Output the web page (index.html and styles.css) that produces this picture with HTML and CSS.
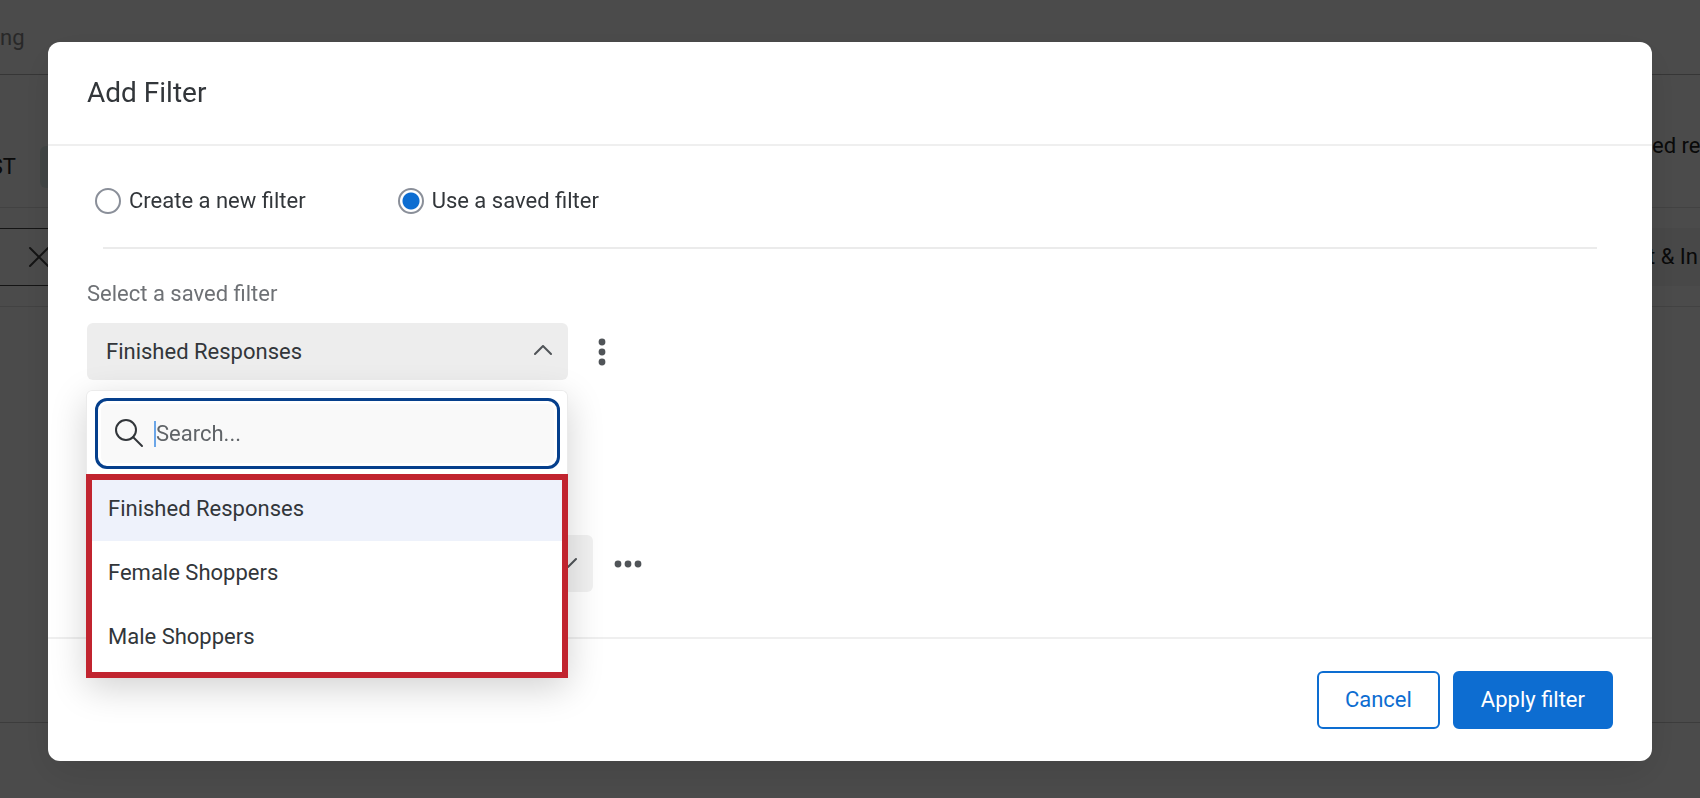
FILE: index.html
```html
<!DOCTYPE html>
<html lang="en">
  <head>
    <meta charset="UTF-8" />
    <meta name="viewport" content="width=device-width, initial-scale=1.0" />
    <title>Add Filter</title>
    <link rel="stylesheet" href="styles.css">
  </head>
  <body>
    <!-- page behind the dialog -->
    <div class="page">
      <div class="page-top"><span>ng</span></div>
      <div class="page-info">
        <span class="timezone">ST</span>
        <span class="tag"></span>
        <span class="summary">ed re</span>
      </div>
      <div class="page-filters">
        <div class="filter-field">
          <svg width="22" height="22" viewBox="0 0 22 22"><path d="M2 2l18 18M20 2L2 20" /></svg>
        </div>
        <div class="filter-chip">t &amp; In</div>
      </div>
      <div class="page-content"></div>
    </div>

    <div class="overlay">
      <div class="modal" role="dialog" aria-labelledby="modalTitle">
        <div class="modal-header">
          <h1 id="modalTitle">Add Filter</h1>
        </div>

        <div class="modal-body">
          <div class="choices">
            <label class="choice"><input type="radio" name="mode" /> Create a new filter</label>
            <label class="choice"><input type="radio" name="mode" checked /> Use a saved filter</label>
          </div>

          <label class="field-label" for="savedFilter">Select a saved filter</label>
          <div class="row">
            <div class="dropdown">
              <button id="savedFilter" class="select" type="button" aria-expanded="true">
                <span>Finished Responses</span>
                <svg width="18" height="14" viewBox="0 0 18 14"><path d="M1 9l8-8 8 8" /></svg>
              </button>
              <div class="menu">
                <div class="menu-search">
                  <label class="search">
                    <svg width="30" height="30" viewBox="0 0 30 30"><circle cx="12" cy="11" r="10" /><path d="M19 18l9 9" /></svg>
                    <span class="caret"></span>
                    <input type="text" placeholder="Search..." aria-label="Search" />
                  </label>
                </div>
                <ul class="options">
                  <li><button class="option selected" type="button">Finished Responses</button></li>
                  <li><button class="option" type="button">Female Shoppers</button></li>
                  <li><button class="option" type="button">Male Shoppers</button></li>
                </ul>
              </div>
            </div>
            <button class="more" type="button" aria-label="Filter options">
              <svg width="8" height="28" viewBox="0 0 8 28"><circle cx="4" cy="4" r="3.4" /><circle cx="4" cy="14" r="3.4" /><circle cx="4" cy="24" r="3.4" /></svg>
            </button>
          </div>

          <div class="row condition">
            <button class="select wide" type="button" aria-label="Condition">
              <svg width="18" height="14" viewBox="0 0 18 14"><path d="M1 2l8 8 8-8" /></svg>
            </button>
            <button class="more" type="button" aria-label="Condition options">
              <svg width="28" height="8" viewBox="0 0 28 8"><circle cx="4" cy="4" r="3.4" /><circle cx="14" cy="4" r="3.4" /><circle cx="24" cy="4" r="3.4" /></svg>
            </button>
          </div>
        </div>

        <div class="modal-footer">
          <button class="button cancel" type="button">Cancel</button>
          <button class="button apply" type="button">Apply filter</button>
        </div>
      </div>
    </div>
  </body>
</html>
```
FILE: styles.css
```css
* {
  box-sizing: border-box;
}
body {
  font-family: Roboto, "Liberation Sans", sans-serif;
  font-size: 22px;
  line-height: 28px;
  color: #32363a;
  margin: 0;
  background-color: #fafafa;
}
button,
input {
  font: inherit;
  color: inherit;
}
button {
  cursor: pointer;
}
svg {
  display: block;
  flex: none;
  fill: none;
  stroke: #505458;
  stroke-width: 2;
  stroke-linecap: round;
  stroke-linejoin: round;
}

/* page behind the dialog */
.page {
  display: flex;
  flex-direction: column;
  height: 100vh;
  overflow: hidden;
  color: #222;
}
.page-top {
  height: 75px;
  padding-top: 24px;
  border-bottom: 1px solid #b4b4b4;
  color: #888;
}
.page-info {
  display: flex;
  align-items: flex-start;
  gap: 24px;
  height: 133px;
  padding-top: 57px;
  border-bottom: 1px solid #dcdcdc;
  white-space: nowrap;
}
.timezone {
  display: flex;
  justify-content: flex-end;
  width: 16px;
  padding-top: 21px;
}
.tag {
  width: 160px;
  height: 42px;
  margin-top: 14px;
  border-radius: 6px;
  background-color: #dcebe8;
}
.summary {
  width: 48px;
  margin-left: auto;
}
.page-filters {
  display: flex;
  justify-content: space-between;
  padding: 20px 0;
  border-bottom: 1px solid #dcdcdc;
}
.filter-field {
  display: flex;
  align-items: center;
  width: 200px;
  height: 58px;
  padding-left: 28px;
  border: solid #444;
  border-width: 1px 0;
}
.filter-field svg {
  stroke: #444;
}
.filter-chip {
  width: 240px;
  padding: 15px 0 15px 188px;
  background-color: #f0f0f0;
  white-space: nowrap;
}
.page-content {
  flex: 1;
  margin-bottom: 75px;
  border-bottom: 1px solid #c8c8c8;
}

/* dialog */
.overlay {
  position: fixed;
  inset: 0;
  padding: 42px 48px;
  background-color: rgba(0, 0, 0, 0.7);
}
.modal {
  background-color: white;
  border-radius: 12px;
  box-shadow: 0 12px 40px rgba(0, 0, 0, 0.1);
}
.modal-header {
  padding: 33px 39px;
  border-bottom: 2px solid #efefef;
}
h1 {
  margin: 0;
  font-size: 28px;
  line-height: 36px;
  font-weight: normal;
}
.modal-body {
  padding: 0 39px 45px;
}
.choices {
  display: flex;
  gap: 92px;
  margin: 0 16px;
  padding: 41px 0 32px;
  border-bottom: 2px solid #ebebeb;
}
.choice {
  display: flex;
  align-items: center;
  gap: 8px;
}
.choice:first-child {
  margin-left: -8px;
}
.choice input {
  appearance: none;
  width: 26px;
  height: 26px;
  margin: 0;
  border: 2px solid #8a8f99;
  border-radius: 50%;
}
.choice input:checked {
  background: radial-gradient(circle, #0d6dd1 8px, white 9px);
}
.field-label {
  display: block;
  padding: 31px 0 15px;
  color: #6e7175;
}
.row {
  display: flex;
  align-items: center;
}
.dropdown {
  position: relative;
  width: 481px;
}
.select {
  display: flex;
  align-items: center;
  justify-content: space-between;
  width: 100%;
  height: 57px;
  padding: 0 16px 0 19px;
  border: none;
  border-radius: 6px;
  background-color: #ededed;
}
.select.wide {
  width: 506px;
  justify-content: flex-end;
  background-color: #f1f1f1;
}
.more {
  display: flex;
  padding: 8px 24px;
  margin-left: 6px;
  border: none;
  background: none;
}
.condition .more {
  margin-left: -3px;
}
.more svg {
  fill: #505458;
  stroke: none;
}
.condition {
  margin-top: 155px;
}

/* saved filter menu */
.menu {
  position: absolute;
  top: 67px;
  left: -1px;
  right: 0;
  border-radius: 6px;
  background-color: white;
  box-shadow: 0 10px 36px rgba(0, 0, 0, 0.18);
}
.menu-search {
  padding: 7px 7px 5px 8px;
  border: 1px solid #ebebeb;
  border-bottom: none;
  border-radius: 6px 6px 0 0;
}
.search {
  display: flex;
  align-items: center;
  height: 71px;
  padding: 0 16px;
  border: 3px solid #053f8c;
  border-radius: 12px;
  background-color: #f9f9f9;
  box-shadow: inset 0 0 0 3px white;
}
.search svg {
  stroke: #32363a;
}
.caret {
  width: 2px;
  height: 26px;
  margin-left: 10px;
  background-color: #6ba6e8;
}
.search input {
  flex: 1;
  min-width: 0;
  padding: 0;
  border: none;
  outline: none;
  background: none;
}
.search input::placeholder {
  color: #606468;
}
.options {
  list-style: none;
  margin: 0;
  padding: 0 0 3px;
  border: 6px solid #c1242f;
}
.option {
  display: block;
  width: 100%;
  height: 64px;
  padding: 0 16px;
  border: none;
  background: white;
  text-align: left;
}
.option.selected {
  height: 61px;
  padding-bottom: 3px;
  background-color: #eef2fb;
}

.modal-footer {
  display: flex;
  justify-content: flex-end;
  gap: 13px;
  padding: 32px 39px;
  border-top: 2px solid #efefef;
}
.button {
  height: 58px;
  padding: 0 26px;
  border: 2px solid #0d6dd1;
  border-radius: 6px;
}
.cancel {
  background-color: white;
  color: #0d6dd1;
}
.apply {
  background-color: #0d6dd1;
  color: white;
}
```
